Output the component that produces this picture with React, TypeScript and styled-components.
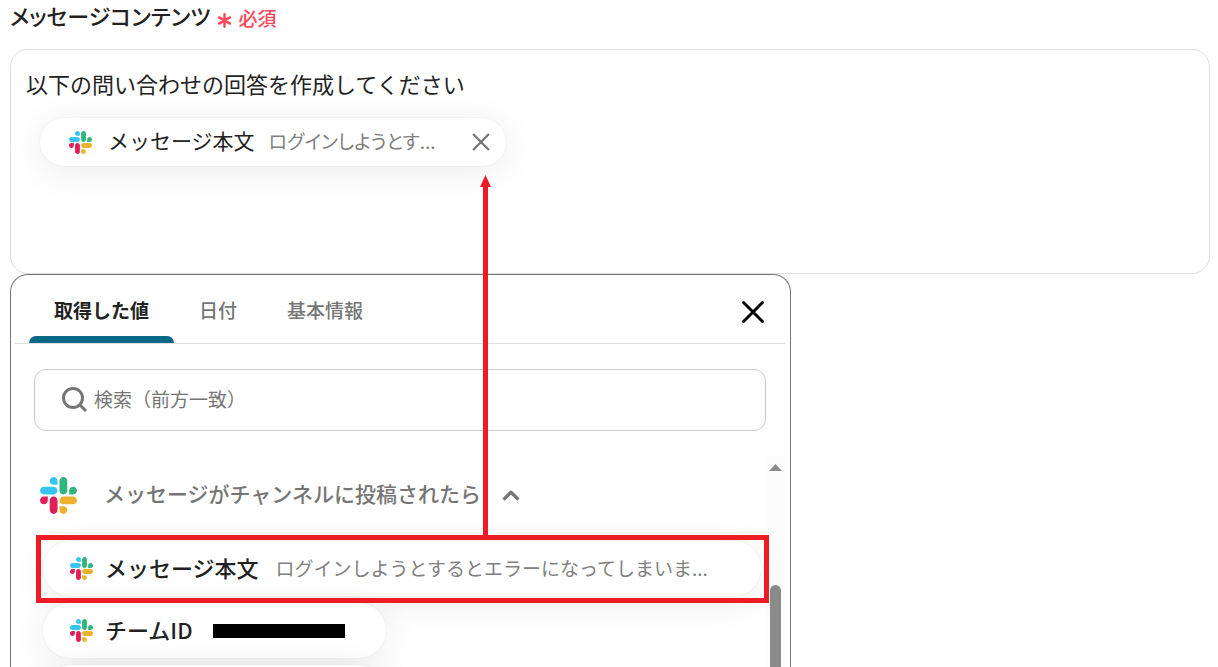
import React from "react";
import styled, { createGlobalStyle } from "styled-components";

const GlobalStyle = createGlobalStyle`
  *, *::before, *::after { box-sizing: border-box; }
  body {
    margin: 0;
    background: #fff;
    color: #222;
    font-family: "Noto Sans CJK JP", "Noto Sans", sans-serif;
  }
  button, input { font: inherit; color: inherit; }
`;

const Page = styled.main`
  height: 100vh;
  padding: 0 8px 0 10px;
  display: flex;
  flex-direction: column;
  overflow: hidden;
`;

const FieldLabel = styled.h1`
  flex: none;
  height: 49px;
  margin: 0;
  display: flex;
  align-items: flex-start;
  gap: 7px;
  font-size: 22px;
  font-feature-settings: "palt";
  font-weight: 500;
  line-height: 30px;
`;

const Required = styled.span`
  display: flex;
  align-items: center;
  gap: 6px;
  color: #ff4757;
  font-size: 19px;
  line-height: 36px;

  > svg { margin-top: 4px; }
`;

const Editor = styled.section`
  flex: none;
  min-height: 225px;
  padding: 17px 15px;
  border: 1px solid #dedede;
  border-radius: 18px;
`;

const Prompt = styled.p`
  margin: 0 0 19px;
  font-size: 22px;
  line-height: 32px;
`;

const Chip = styled.div`
  width: fit-content;
  height: 48px;
  margin-left: 14px;
  padding: 0 15px 0 29px;
  display: flex;
  align-items: center;
  border-radius: 24px;
  background: #fff;
  box-shadow: 0 0 2px rgba(0, 0, 0, 0.08), 0 6px 36px rgba(0, 0, 0, 0.08);
`;

const ValueName = styled.span<{ $strong?: boolean }>`
  margin-left: ${(p) => (p.$strong ? 12 : 16)}px;
  padding-bottom: 4px;
  font-size: ${(p) => (p.$strong ? 22 : 21)}px;
  line-height: 32px;
  font-weight: ${(p) => (p.$strong ? 500 : 400)};
  white-space: nowrap;
`;

const Sample = styled.span<{ $compact?: boolean }>`
  margin-left: ${(p) => (p.$compact ? 14 : 17)}px;
  padding-bottom: 2px;
  color: #808080;
  font-size: 19px;
  font-feature-settings: ${(p) => (p.$compact ? '"palt"' : "normal")};
  line-height: 32px;
  white-space: nowrap;
`;

const IconButton = styled.button`
  padding: 0;
  border: 0;
  background: none;
  display: flex;
  cursor: pointer;
`;

const RemoveButton = styled(IconButton)`
  margin-left: 35px;
  color: #757575;
`;

const Panel = styled.section`
  flex: 1;
  min-height: 0;
  width: 100%;
  max-width: 781px;
  padding: 0 5px 0 4px;
  display: flex;
  flex-direction: column;
  border: 1px solid #757575;
  border-bottom: 0;
  border-radius: 18px 18px 0 0;
`;

const PanelHeader = styled.header`
  flex: none;
  height: 69px;
  padding: 0 20px 0 14px;
  display: flex;
  justify-content: space-between;
  align-items: stretch;
  border-bottom: 1px solid #e0e0e0;
`;

const Tabs = styled.div`
  display: flex;
`;

const Tab = styled.button<{ $active?: boolean }>`
  position: relative;
  padding: 0 25px;
  border: 0;
  background: none;
  color: ${(p) => (p.$active ? "#222" : "#757575")};
  font-size: 19px;
  font-weight: ${(p) => (p.$active ? 700 : 500)};
  cursor: pointer;

  &::after {
    content: "";
    display: ${(p) => (p.$active ? "block" : "none")};
    position: absolute;
    left: 0;
    right: 0;
    bottom: 0;
    height: 7px;
    border-radius: 7px 7px 0 0;
    background: #076985;
  }
`;

const CloseButton = styled(IconButton)`
  align-items: center;
  padding-top: 6px;
  color: #000;
`;

const SearchBox = styled.label`
  flex: none;
  height: 62px;
  margin: 25px 19px 0;
  padding: 0 26px 2px;
  display: flex;
  align-items: center;
  gap: 6px;
  border: 1px solid #c8c8c8;
  border-radius: 12px;
  color: #757575;
`;

const SearchInput = styled.input`
  flex: 1;
  min-width: 0;
  padding: 0;
  border: 0;
  outline: 0;
  background: none;
  font-size: 19px;
  line-height: 28px;

  &::placeholder { color: #757575; opacity: 1; }
`;

const ScrollArea = styled.div`
  flex: 1;
  min-height: 0;
  margin-top: 25px;
  display: flex;
`;

const Results = styled.div`
  flex: 1;
  min-width: 0;
  padding: 20px 5px 0 25px;
`;

const GroupButton = styled.button`
  height: 38px;
  padding: 0;
  border: 0;
  background: none;
  display: flex;
  align-items: center;
  color: #757575;
  font-size: 21px;
  font-weight: 500;
  line-height: 32px;
  cursor: pointer;

  > span { margin: 0 21px 0 27px; padding-bottom: 4px; }
`;

const ValueList = styled.ul`
  list-style: none;
  margin: 27px 0 0;
  padding: 0 0 0 3px;
  display: flex;
  flex-direction: column;
  gap: 7px;
`;

const ValueItem = styled.li`
  position: relative;
`;

const ValueButton = styled.button<{ $wide?: boolean }>`
  width: ${(p) => (p.$wide ? "100%" : "343px")};
  height: 55px;
  padding: 0 27px;
  display: flex;
  align-items: center;
  border: 0;
  border-radius: 28px;
  background: #fff;
  box-shadow: 0 0 2px rgba(0, 0, 0, 0.08), 0 6px 36px rgba(0, 0, 0, 0.08);
  cursor: pointer;
`;

const Redacted = styled.span`
  width: 132px;
  height: 14px;
  margin-left: 20px;
  background: #000;
`;

const Highlight = styled.div`
  position: absolute;
  z-index: 1;
  inset: -6px -8px -7px -7px;
  border: 5px solid #ed1c24;
  pointer-events: none;
`;

const Arrow = styled.svg`
  position: absolute;
  left: 439px;
  bottom: 100%;
`;

const Scrollbar = styled.div`
  flex: none;
  width: 19px;
  padding: 8px 0 0 3px;
  display: flex;
  flex-direction: column;
  background: #fcfcfc;
`;

const Thumb = styled.div`
  flex: 1;
  width: 11px;
  margin: 114px 0 0 1px;
  border-radius: 6px 6px 0 0;
  background: #8b8b8b;
`;

const SlackLogo = ({ size }: { size: number }) => (
  <svg width={size} height={size} viewBox="0 0 122.8 122.8" aria-hidden="true">
    <path fill="#e01e5a" d="M25.8 77.6c0 7.1-5.8 12.9-12.9 12.9S0 84.7 0 77.6s5.8-12.9 12.9-12.9h12.9v12.9zm6.5 0c0-7.1 5.8-12.9 12.9-12.9s12.9 5.8 12.9 12.9v32.3c0 7.1-5.8 12.9-12.9 12.9s-12.9-5.8-12.9-12.9V77.6z" />
    <path fill="#36c5f0" d="M45.2 25.8c-7.1 0-12.9-5.8-12.9-12.9S38.1 0 45.2 0s12.9 5.8 12.9 12.9v12.9H45.2zm0 6.5c7.1 0 12.9 5.8 12.9 12.9s-5.8 12.9-12.9 12.9H12.9C5.8 58.1 0 52.3 0 45.2s5.8-12.9 12.9-12.9h32.3z" />
    <path fill="#2eb67d" d="M97 45.2c0-7.1 5.8-12.9 12.9-12.9s12.9 5.8 12.9 12.9-5.8 12.9-12.9 12.9H97V45.2zm-6.5 0c0 7.1-5.8 12.9-12.9 12.9s-12.9-5.8-12.9-12.9V12.9C64.7 5.8 70.5 0 77.6 0s12.9 5.8 12.9 12.9v32.3z" />
    <path fill="#ecb22e" d="M77.6 97c7.1 0 12.9 5.8 12.9 12.9s-5.8 12.9-12.9 12.9-12.9-5.8-12.9-12.9V97h12.9zm0-6.5c-7.1 0-12.9-5.8-12.9-12.9s5.8-12.9 12.9-12.9h32.3c7.1 0 12.9 5.8 12.9 12.9s-5.8 12.9-12.9 12.9H77.6z" />
  </svg>
);

type CrossProps = { size: number; weight: number; cap: "round" | "butt" };

const Cross = ({ size, weight, cap }: CrossProps) => (
  <svg width={size} height={size} viewBox="0 0 24 24" fill="none" stroke="currentColor" strokeWidth={weight} strokeLinecap={cap} aria-hidden="true">
    <path d="M2.5 2.5l19 19M21.5 2.5l-19 19" />
  </svg>
);

export default function App() {
  return (
    <>
      <GlobalStyle />
      <Page>
        <FieldLabel>
          メッセージコンテンツ
          <Required>
            <svg width="15" height="15" viewBox="0 0 15 15" stroke="currentColor" strokeWidth="2.4" strokeLinecap="round" aria-hidden="true">
              <path d="M7.5 1.2v12.6M2 4.4l11 6.2M13 4.4L2 10.6" />
            </svg>
            必須
          </Required>
        </FieldLabel>

        <Editor aria-label="メッセージコンテンツ">
          <Prompt>以下の問い合わせの回答を作成してください</Prompt>
          <Chip>
            <SlackLogo size={23} />
            <ValueName>メッセージ本文</ValueName>
            <Sample $compact>ログインしようとす...</Sample>
            <RemoveButton type="button" aria-label="削除">
              <Cross size={20} weight={2.6} cap="butt" />
            </RemoveButton>
          </Chip>
        </Editor>

        <Panel>
          <PanelHeader>
            <Tabs role="tablist">
              <Tab type="button" role="tab" aria-selected="true" $active>取得した値</Tab>
              <Tab type="button" role="tab" aria-selected="false">日付</Tab>
              <Tab type="button" role="tab" aria-selected="false">基本情報</Tab>
            </Tabs>
            <CloseButton type="button" aria-label="閉じる">
              <Cross size={24} weight={3} cap="round" />
            </CloseButton>
          </PanelHeader>

          <SearchBox>
            <svg width="27" height="27" viewBox="0 0 27 27" fill="none" stroke="currentColor" strokeWidth="3" aria-hidden="true">
              <circle cx="12" cy="12" r="9.5" />
              <path d="M18.5 18.5l6.5 6.5" />
            </svg>
            <SearchInput type="text" aria-label="検索" placeholder="検索（前方一致）" />
          </SearchBox>

          <ScrollArea>
            <Results>
              <GroupButton type="button" aria-expanded="true">
                <SlackLogo size={37} />
                <span>メッセージがチャンネルに投稿されたら</span>
                <svg width="18" height="12" viewBox="0 0 18 12" fill="none" stroke="currentColor" strokeWidth="3.4" strokeLinejoin="round" aria-hidden="true">
                  <path d="M1.6 10.6L9 3.2l7.4 7.4" />
                </svg>
              </GroupButton>
              <ValueList>
                <ValueItem>
                  <ValueButton type="button" $wide>
                    <SlackLogo size={23} />
                    <ValueName $strong>メッセージ本文</ValueName>
                    <Sample>ログインしようとするとエラーになってしまいま...</Sample>
                  </ValueButton>
                  <Highlight>
                    <Arrow width="11" height="365" viewBox="0 0 11 365" fill="#ed1c24" aria-hidden="true">
                      <path d="M5.5 0L11 12H8v353H3V12H0z" />
                    </Arrow>
                  </Highlight>
                </ValueItem>
                <ValueItem>
                  <ValueButton type="button">
                    <SlackLogo size={23} />
                    <ValueName $strong>チームID</ValueName>
                    <Redacted />
                  </ValueButton>
                </ValueItem>
                <ValueItem>
                  <ValueButton type="button">
                    <SlackLogo size={23} />
                  </ValueButton>
                </ValueItem>
              </ValueList>
            </Results>
            <Scrollbar aria-hidden="true">
              <svg width="13" height="7" viewBox="0 0 13 7" fill="#8b8b8b">
                <path d="M6.5 0L13 7H0z" />
              </svg>
              <Thumb />
            </Scrollbar>
          </ScrollArea>
        </Panel>
      </Page>
    </>
  );
}
